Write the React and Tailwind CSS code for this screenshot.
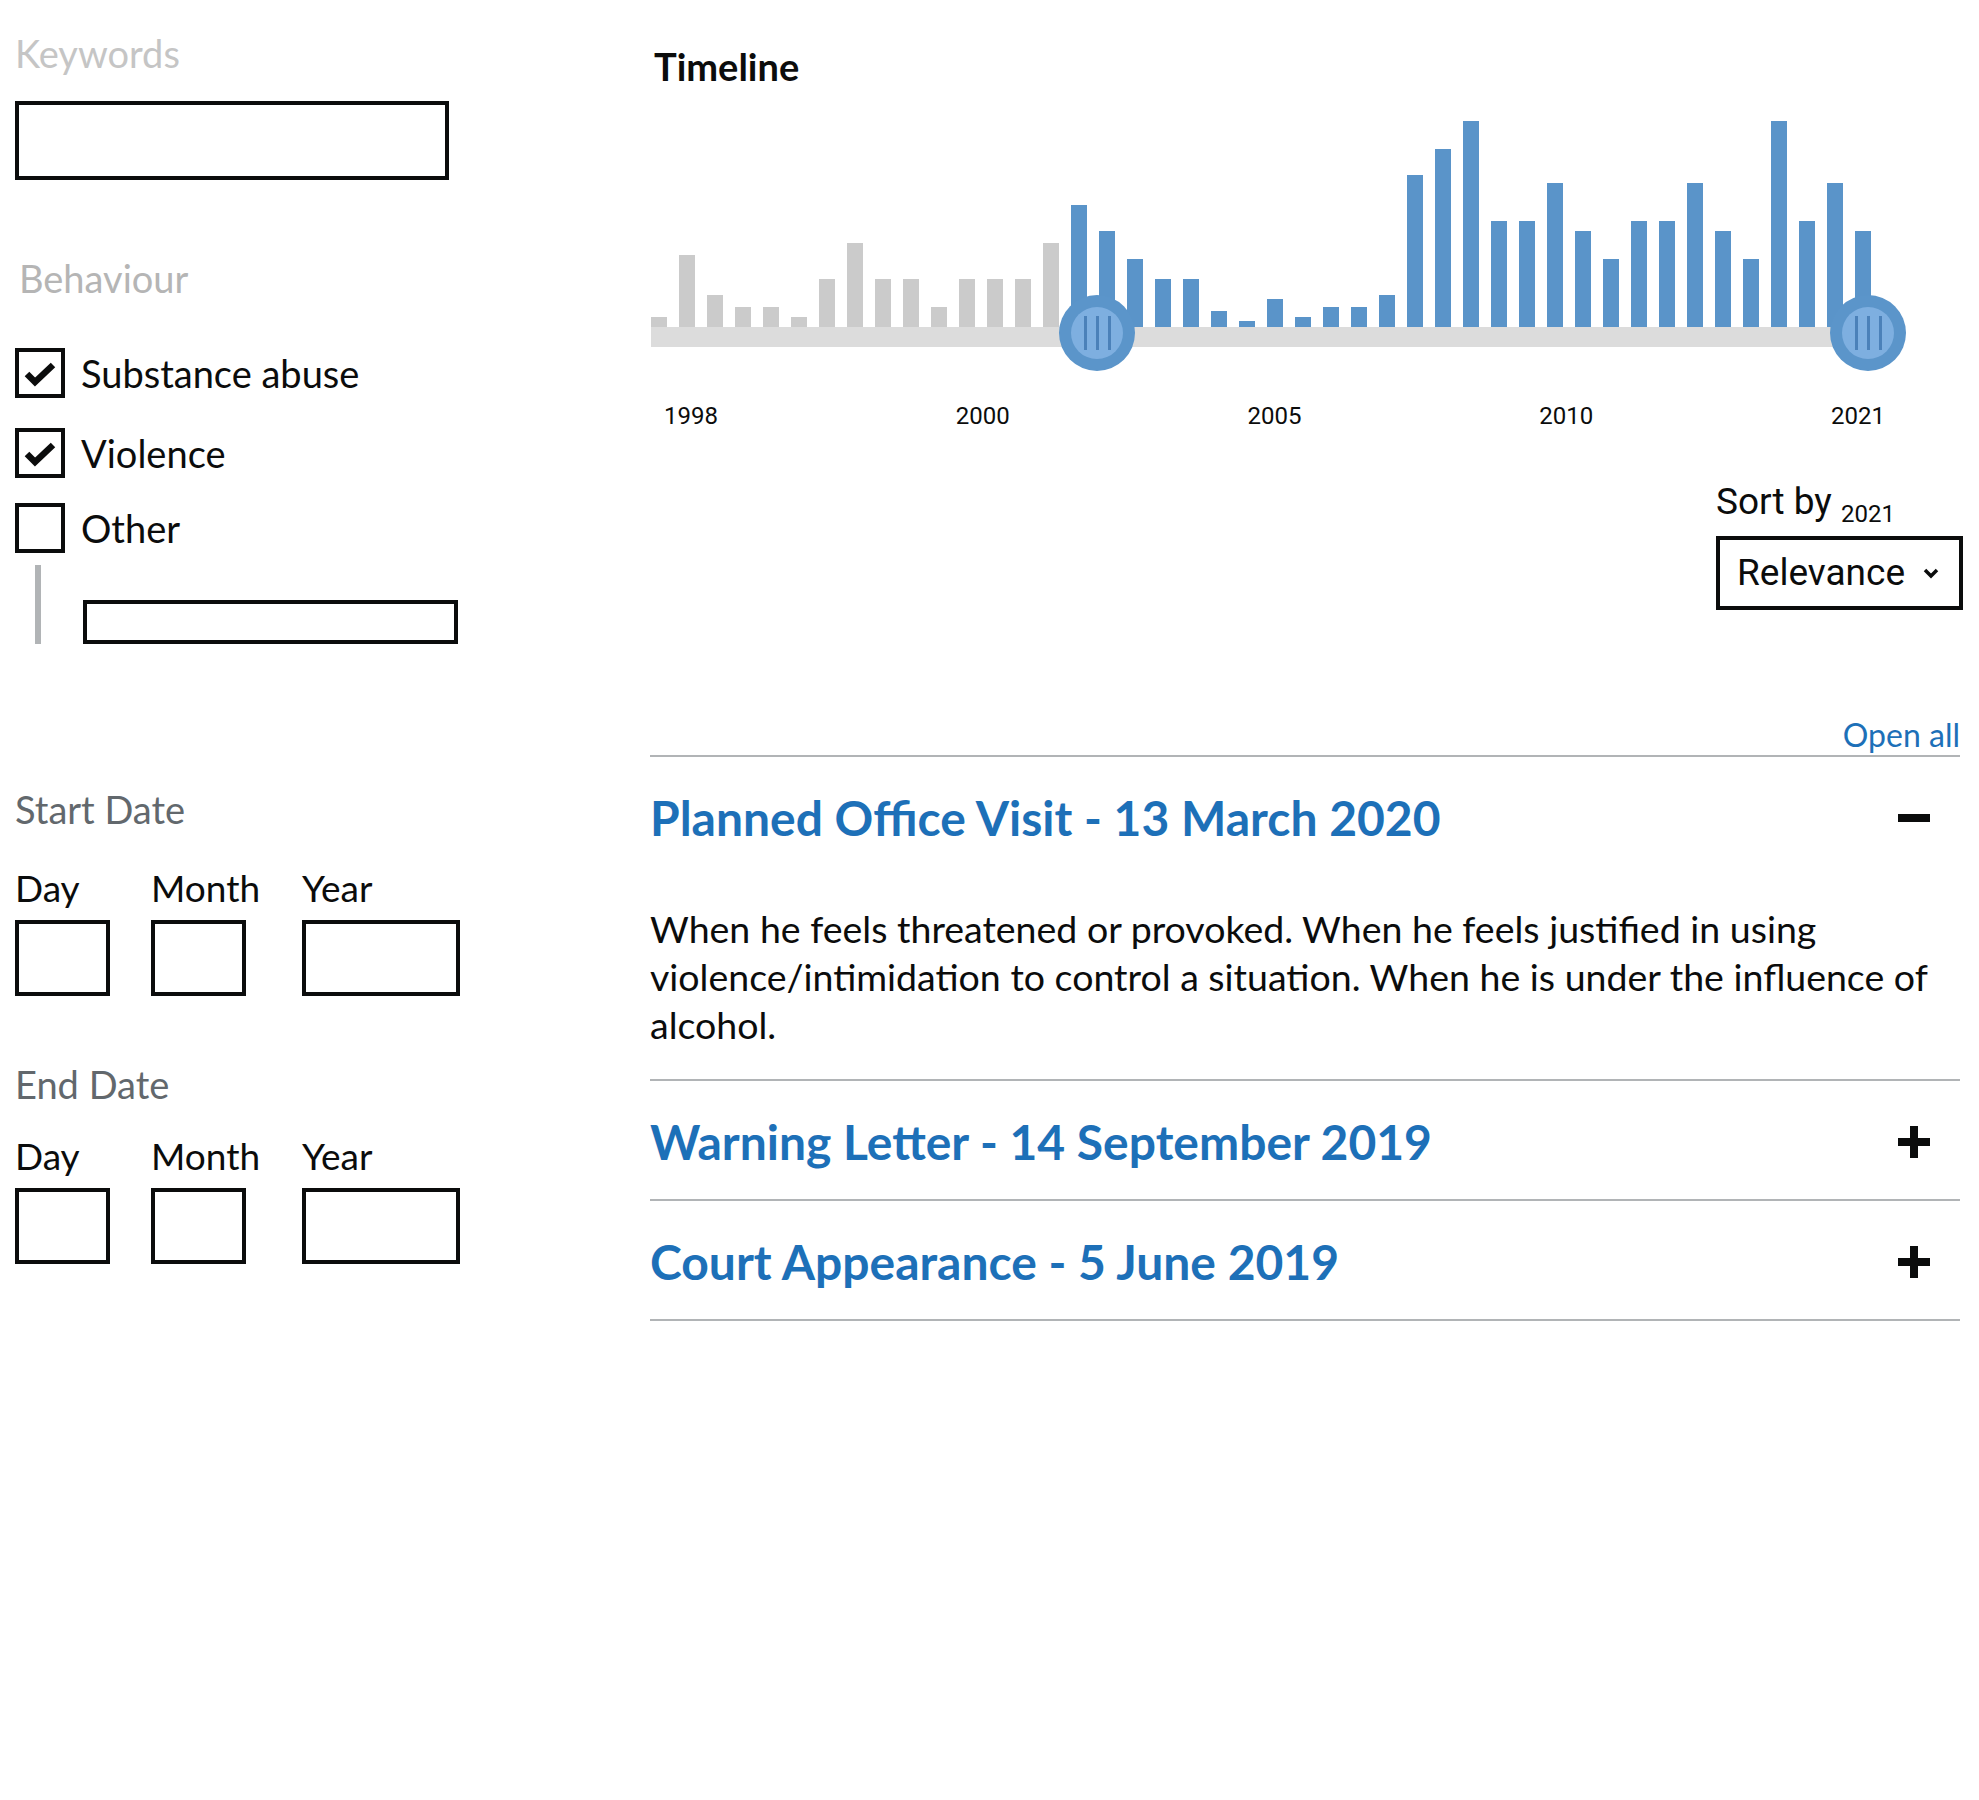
import React from "react";

const grayBars = [10, 72, 32, 20, 20, 10, 48, 84, 48, 48, 20, 48, 48, 48, 84];
const blueBars = [
  122, 96, 68, 48, 48, 16, 6, 28, 10, 20, 20, 32, 152, 178, 206, 106, 106, 144,
  96, 68, 106, 106, 144, 96, 68, 206, 106, 144, 96,
];
const years = ["1998", "2000", "2005", "2010", "2021"];

function Checkbox({ checked, label, className = "" }) {
  return (
    <label className={`flex items-center ${className}`}>
      <span className="flex h-[50px] w-[50px] items-center justify-center border-4 border-[#0b0c0c]">
        {checked && (
          <svg width="42" height="42" viewBox="0 0 42 42">
            <path d="M8 22 L16 30 L34 13" fill="none" stroke="#0b0c0c" strokeWidth="6.5" />
          </svg>
        )}
      </span>
      <span className="ml-[16px] text-[38px] leading-[44px]">{label}</span>
    </label>
  );
}

function DateGroup({ title, gap, className = "" }) {
  return (
    <div className={className}>
      <div className="text-[38px] leading-[44px] text-[#62686d]">{title}</div>
      <div className={`flex ${gap}`}>
        {/* Day */}
        <div className="w-[136px]">
          <div className="text-[37px] leading-[44px]">Day</div>
          <div className="mt-[10px] h-[76px] w-[95px] border-4 border-[#0b0c0c]" />
        </div>
        {/* Month */}
        <div className="w-[151px]">
          <div className="text-[37px] leading-[44px]">Month</div>
          <div className="mt-[10px] h-[76px] w-[95px] border-4 border-[#0b0c0c]" />
        </div>
        {/* Year */}
        <div className="w-[158px]">
          <div className="text-[37px] leading-[44px]">Year</div>
          <div className="mt-[10px] h-[76px] w-[158px] border-4 border-[#0b0c0c]" />
        </div>
      </div>
    </div>
  );
}

function Thumb({ className = "" }) {
  return (
    <div
      className={`absolute top-[174px] flex h-[76px] w-[76px] items-center justify-center rounded-full bg-[#5b95ca] ${className}`}
    >
      <div className="flex h-[52px] w-[52px] items-center justify-center gap-[9px] rounded-full bg-[#7eafe0]">
        <span className="h-[34px] w-[3px] bg-[#4b81b9]" />
        <span className="h-[34px] w-[3px] bg-[#4b81b9]" />
        <span className="h-[34px] w-[3px] bg-[#4b81b9]" />
      </div>
    </div>
  );
}

function PlusIcon() {
  return (
    <svg width="32" height="32" viewBox="0 0 32 32">
      <rect x="12" y="0" width="8" height="32" fill="#0b0c0c" />
      <rect x="0" y="12" width="32" height="8" fill="#0b0c0c" />
    </svg>
  );
}

function MinusIcon() {
  return (
    <svg width="32" height="32" viewBox="0 0 32 32">
      <rect x="0" y="12" width="32" height="8" fill="#0b0c0c" />
    </svg>
  );
}

function Section({ title, open, children }) {
  return (
    <div className="border-b-2 border-[#b1b4b6] pb-[29px] pt-[33px]">
      <div className="flex items-center justify-between pr-[30px]">
        <h3 className="text-[48px] font-bold leading-[56px] text-[#1d70b8]">{title}</h3>
        {open ? <MinusIcon /> : <PlusIcon />}
      </div>
      {open && children}
    </div>
  );
}

export default function App() {
  return (
    <div className="flex min-h-[1800px] w-[1979px] bg-white font-[Lato,sans-serif] text-[#0b0c0c]">
      {/* Filters */}
      <div className="flex w-[650px] flex-col pl-[15px]">
        <div className="mt-[31px] text-[38px] leading-[44px] text-[#c5c5c5]">Keywords</div>
        <div className="mt-[26px] h-[79px] w-[434px] border-4 border-[#0b0c0c]" />

        <div className="ml-[4px] mt-[76px] text-[38px] leading-[44px] text-[#b5b5b5]">Behaviour</div>
        <Checkbox checked label="Substance abuse" className="mt-[48px]" />
        <Checkbox checked label="Violence" className="mt-[30px]" />
        <Checkbox label="Other" className="mt-[25px]" />
        <div className="mt-[12px] flex items-end">
          <div className="ml-[20px] h-[79px] w-[6px] bg-[#b1b4b6]" />
          <div className="ml-[42px] h-[44px] w-[375px] border-4 border-[#0b0c0c]" />
        </div>

        <DateGroup title="Start Date" gap="mt-[35px]" className="mt-[143px]" />
        <DateGroup title="End Date" gap="mt-[28px]" className="mt-[66px]" />
      </div>

      {/* Results */}
      <div className="flex w-[1310px] flex-col">
        <h2 className="ml-[4px] mt-[44px] text-[38px] font-bold leading-[44px]">Timeline</h2>

        {/* Chart */}
        <div className="relative ml-px mt-[33px] w-[1220px]">
          <div className="flex h-[206px] items-end gap-[12px]">
            {grayBars.map((h, i) => (
              <div key={"g" + i} className="w-[16px] bg-[#cbcbcb]" style={{ height: h }} />
            ))}
            {blueBars.map((h, i) => (
              <div key={"b" + i} className="w-[16px] bg-[#5a94c9]" style={{ height: h }} />
            ))}
          </div>
          <div className="h-[20px] w-[1217px] bg-[#dcdcdc]" />
          <Thumb className="left-[408px]" />
          <Thumb className="left-[1179px]" />
        </div>

        <div className="ml-px mt-[54px] flex w-[1234px] justify-between pl-[13px] font-[Roboto,sans-serif] text-[24px] leading-[30px]">
          {years.map((y) => (
            <span key={y}>{y}</span>
          ))}
        </div>

        {/* Sort */}
        <div className="-mr-[3px] mt-[49px] w-[247px] self-end font-[Roboto,sans-serif]">
          <div className="h-[44px] whitespace-nowrap text-[37px] leading-[44px]">
            Sort by <span className="align-sub text-[24px] leading-none">2021</span>
          </div>
          <div className="mt-[12px] flex h-[74px] items-center justify-between border-4 border-[#0b0c0c] pl-[17px] pr-[20px]">
            <span className="text-[37px]">Relevance</span>
            <svg width="16" height="11" viewBox="0 0 16 11">
              <path d="M2 2 L8 8 L14 2" fill="none" stroke="#0b0c0c" strokeWidth="3.5" />
            </svg>
          </div>
        </div>

        <div className="mt-[105px] text-right text-[32px] leading-[40px] text-[#1d70b8]">Open all</div>

        {/* Accordion */}
        <div className="border-t-2 border-[#b1b4b6]">
          <Section title="Planned Office Visit - 13 March 2020" open>
            <p className="mt-[59px] pb-px text-[37.5px] leading-[48px]">
              When he feels threatened or provoked. When he feels justified in using
              violence/intimidation to control a situation. When he is under the influence of
              alcohol.
            </p>
          </Section>
          <Section title="Warning Letter - 14 September 2019" />
          <Section title="Court Appearance - 5 June 2019" />
        </div>
      </div>
    </div>
  );
}
